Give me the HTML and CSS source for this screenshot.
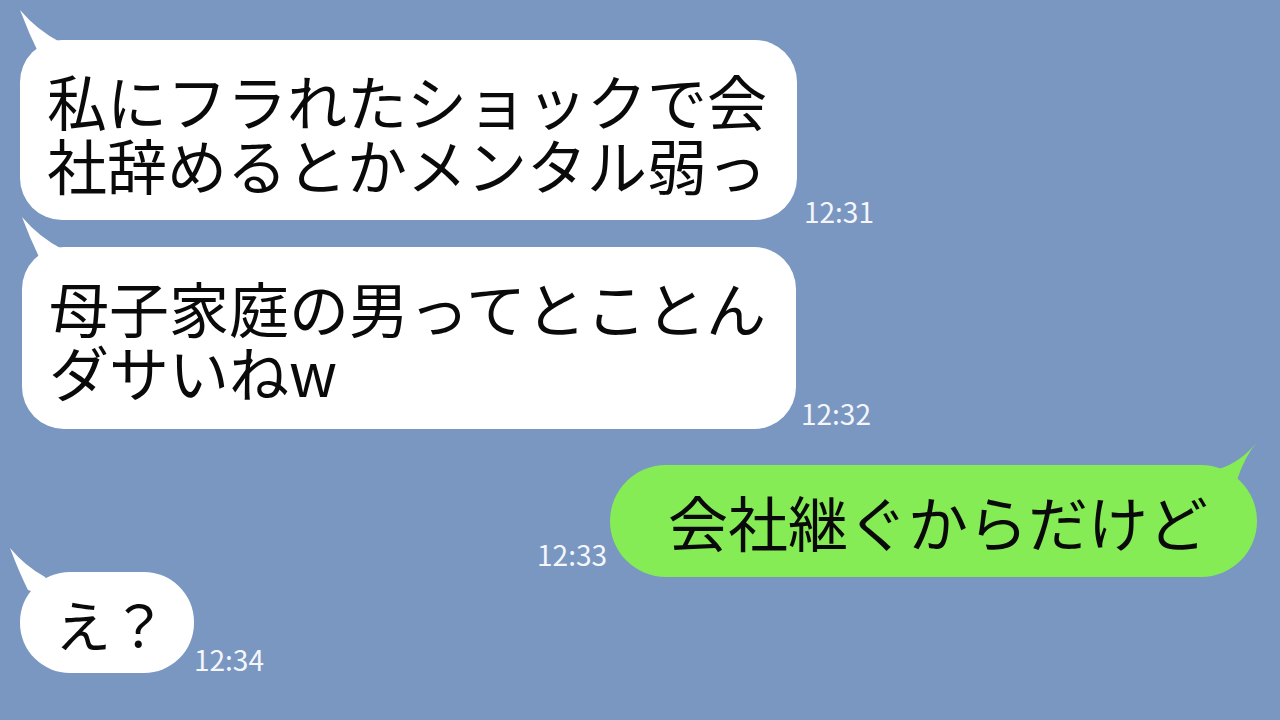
FILE: index.html
```html
<!DOCTYPE html>
<html lang="ja">
<head>
    <meta charset="UTF-8">
    <meta name="viewport" content="width=device-width, initial-scale=1.0">
    <title>トーク</title>
    <link rel="stylesheet" href="styles.css">
</head>
<body>
    <div class="talk">
        <div class="row row-1">
            <div class="bubble bubble-left">
                <svg class="tail tail-left" width="60" height="60" viewBox="0 0 60 60"><path d="M0 0 Q9 24 20 46 L48 52 L40 32 Q17 20 0 0 Z"/></svg>
                私にフラれたショックで会<br>社辞めるとかメンタル弱っ
            </div>
            <span class="time time-1">12:31</span>
        </div>
        <div class="row row-2">
            <div class="bubble bubble-left">
                <svg class="tail tail-left" width="60" height="60" viewBox="0 0 60 60"><path d="M0 0 Q9 24 20 46 L48 52 L40 32 Q17 20 0 0 Z"/></svg>
                母子家庭の男ってとことん<br>ダサいねw
            </div>
            <span class="time time-2">12:32</span>
        </div>
        <div class="row row-3 row-right">
            <span class="time time-3">12:33</span>
            <div class="bubble bubble-right">
                <svg class="tail tail-right" width="60" height="60" viewBox="0 0 60 60"><path d="M60 0 Q48 14 40 38 L20 50 L22 27 Q44 20 60 0 Z"/></svg>
                会社継ぐからだけど
            </div>
        </div>
        <div class="row row-4">
            <div class="bubble bubble-left bubble-short">
                <svg class="tail tail-small" width="60" height="60" viewBox="0 0 60 60"><path d="M0 0 Q9 24 18 42 L48 52 L35 29 Q15 18 0 0 Z"/></svg>
                え？
            </div>
            <span class="time time-4">12:34</span>
        </div>
    </div>
</body>
</html>
```
FILE: styles.css
```css
body {
    margin: 0;
    background-color: #7a97c2;
    font-family: 'Noto Sans CJK JP', 'Noto Sans', sans-serif;
    color: #0a0a0a;
    height: 720px;
    overflow: hidden;
}
.talk {
    display: flex;
    flex-direction: column;
    padding: 40px 23px 0 20px;
}
.row {
    display: flex;
    align-items: flex-end;
    gap: 5px;
}
.row-right {
    justify-content: flex-end;
    gap: 3px;
}
.row-2 { margin-top: 27px; }
.row-3 { margin-top: 36px; }
.row-4 { margin-top: -5px; }

.bubble {
    position: relative;
    font-size: 60px;
    line-height: 64px;
    white-space: nowrap;
}
.bubble-left {
    background-color: #fff;
    border-radius: 42px;
    padding: 28px 30px 24px 27px;
}
.row-2 .bubble-left {
    padding-bottom: 26px;
    margin-left: 2px;
}
.bubble-right {
    background-color: #86ec55;
    border-radius: 56px;
    padding: 24px 49px 24px 58px;
}
.bubble-short {
    font-size: 56px;
    border-radius: 50px;
    padding: 19px 27px 18px 35px;
}
.bubble > svg {
    position: absolute;
}
.tail path {
    fill: #fff;
}
.tail-left {
    left: 0;
    top: -30px;
}
.tail-small {
    left: -10px;
    top: -24px;
}
.tail-right {
    right: 0;
    top: -23px;
}
.tail-right path {
    fill: #86ec55;
}

/* timestamps sit on the bubble's lower edge */
.time {
    font-size: 28px;
    line-height: 1;
    color: #f4f6fb;
}
.time-1 { margin-bottom: -5px; margin-left: 2px; }
.time-2 { margin-bottom: 2px; }
.time-3 { margin-bottom: 9px; }
.time-4 { margin-bottom: 0; margin-left: -5px; }
```
